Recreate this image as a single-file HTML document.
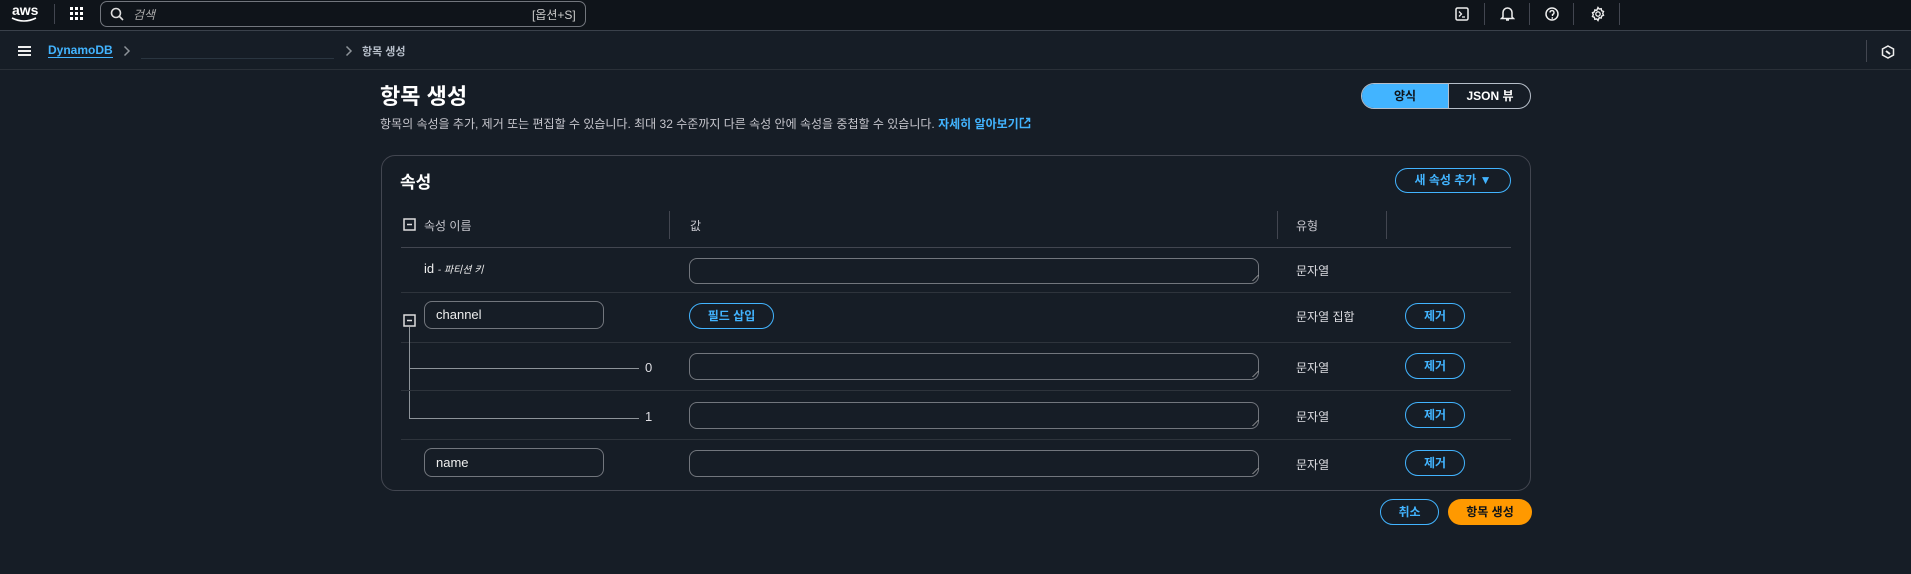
<!DOCTYPE html>
<html><head><meta charset="utf-8"><style>
*{box-sizing:border-box;margin:0;padding:0}
body{width:1911px;height:574px;background:#161d26;font-family:"Liberation Sans","Noto Sans CJK KR",sans-serif;color:#dedee3;position:relative;overflow:hidden;font-size:13px}
.a{position:absolute;white-space:nowrap}
.top{position:absolute;left:0;top:0;width:1911px;height:31px;background:#0f141a;border-bottom:1px solid #3a414b}
.bc{position:absolute;left:0;top:32px;width:1911px;height:38px;border-bottom:1px solid #2a3038}
.sep{position:absolute;width:1px;background:#424650}
.inp{position:absolute;border:1px solid #72767d;border-radius:8px;background:#161d26}
.btn{position:absolute;border:1px solid #42b4ff;border-radius:16px;color:#42b4ff;font-weight:bold;font-size:12px;text-align:center}
.hl{position:absolute;height:1px;background:#2e343c;left:401px;width:1110px}
.typ{position:absolute;left:1296px;font-size:12px}
.rz{position:absolute;right:2px;bottom:2px;width:6px;height:6px;border-right:1px solid #aaa;transform:skewX(-45deg)}
</style></head><body>
<div class="top"></div>
<div class="a" style="left:12px;top:2px;font-size:14px;font-weight:bold;color:#fff">aws</div>
<svg class="a" style="left:10px;top:16px" width="30" height="8"><path d="M2 2 Q14 8 26 2" stroke="#fff" stroke-width="1.6" fill="none"/></svg>
<div class="sep" style="left:54px;top:4px;height:20px"></div>
<svg class="a" style="left:70px;top:7px" width="14" height="14" fill="#fff"><rect x="0" y="0" width="3" height="3"/><rect x="5" y="0" width="3" height="3"/><rect x="10" y="0" width="3" height="3"/><rect x="0" y="5" width="3" height="3"/><rect x="5" y="5" width="3" height="3"/><rect x="10" y="5" width="3" height="3"/><rect x="0" y="10" width="3" height="3"/><rect x="5" y="10" width="3" height="3"/><rect x="10" y="10" width="3" height="3"/></svg>
<div class="a" style="left:100px;top:1px;width:486px;height:26px;border:1px solid #72767d;border-radius:7px;background:#0f141a"></div>
<svg class="a" style="left:110px;top:7px" width="14" height="14"><circle cx="6" cy="6" r="4.5" stroke="#ddd" stroke-width="1.6" fill="none"/><path d="M9.5 9.5L13 13" stroke="#ddd" stroke-width="1.6"/></svg>
<div class="a" style="left:133px;top:6px;font-style:italic;color:#aaa;font-size:12px">검색</div>
<div class="a" style="left:532px;top:6px;color:#ccc;font-size:12px">[옵션+S]</div>
<svg class="a" style="left:1455px;top:7px" width="15" height="15"><rect x="1" y="1" width="12" height="12" rx="1.5" stroke="#eee" stroke-width="1.5" fill="none"/><path d="M4 4.5L6.5 7 4 9.5M7 10h3" stroke="#eee" stroke-width="1.3" fill="none"/></svg>
<div class="sep" style="left:1484px;top:3px;height:22px"></div>
<svg class="a" style="left:1500px;top:6px" width="15" height="16"><path d="M3 11V6.5a4.5 4.5 0 0 1 9 0V11l1.5 1.5h-12z M6 14h3" stroke="#eee" stroke-width="1.5" fill="none"/></svg>
<div class="sep" style="left:1529px;top:3px;height:22px"></div>
<svg class="a" style="left:1545px;top:7px" width="15" height="15"><circle cx="7" cy="7" r="6" stroke="#eee" stroke-width="1.5" fill="none"/><path d="M5 5.5a2 2 0 1 1 2.5 2V9" stroke="#eee" stroke-width="1.4" fill="none"/><circle cx="7.3" cy="11" r=".9" fill="#eee"/></svg>
<div class="sep" style="left:1573px;top:3px;height:22px"></div>
<svg class="a" style="left:1590px;top:6px" width="16" height="16"><path d="M8 1.5l1.2 1.6 2-.4.4 2 1.9.8-.8 1.9.8 1.9-1.9.8-.4 2-2-.4L8 14.5l-1.2-1.6-2 .4-.4-2-1.9-.8.8-1.9-.8-1.9 1.9-.8.4-2 2 .4z" stroke="#eee" stroke-width="1.4" fill="none"/><circle cx="8" cy="8" r="2.2" stroke="#eee" stroke-width="1.3" fill="none"/></svg>
<div class="sep" style="left:1619px;top:3px;height:22px"></div>

<div class="bc"></div>
<div class="a" style="left:18px;top:46px;width:13px;height:2px;background:#eee;box-shadow:0 4px #eee,0 8px #eee"></div>
<div class="a" style="left:48px;top:43px;color:#42b4ff;font-size:12px;font-weight:bold;border-bottom:1px solid #42b4ff;line-height:14px">DynamoDB</div>
<svg class="a" style="left:123px;top:45px" width="8" height="12"><path d="M1.5 1.5L6 6l-4.5 4.5" stroke="#8d9399" stroke-width="1.5" fill="none"/></svg>
<div class="a" style="left:141px;top:58px;width:193px;height:1px;background:#2a3540"></div>
<svg class="a" style="left:345px;top:45px" width="8" height="12"><path d="M1.5 1.5L6 6l-4.5 4.5" stroke="#8d9399" stroke-width="1.5" fill="none"/></svg>
<div class="a" style="left:362px;top:43px;color:#b6bec9;font-size:11px;font-weight:bold">항목 생성</div>
<div class="sep" style="left:1866px;top:40px;height:22px"></div>
<svg class="a" style="left:1881px;top:45px" width="14" height="14"><path d="M7 1l5.5 3v6L7 13 1.5 10V4z" stroke="#eee" stroke-width="1.5" fill="none"/><path d="M5 6l4 3" stroke="#eee" stroke-width="2"/></svg>

<div class="a" style="left:380px;top:79px;font-size:22px;font-weight:bold;color:#fff">항목 생성</div>
<div class="a" style="left:380px;top:115px;font-size:12px;color:#c6c6cd">항목의 속성을 추가, 제거 또는 편집할 수 있습니다. 최대 32 수준까지 다른 속성 안에 속성을 중첩할 수 있습니다. <span style="color:#42b4ff;font-weight:bold">자세히 알아보기</span></div>
<svg class="a" style="left:1019px;top:117px" width="12" height="12"><path d="M5 1.5H1.5v9h9V7M7 1.5h3.5V5M10.5 1.5L5.5 6.5" stroke="#42b4ff" stroke-width="1.5" fill="none"/></svg>

<div class="a" style="left:1361px;top:83px;width:170px;height:26px;border:1px solid #b6bec9;border-radius:14px;overflow:hidden">
<div class="a" style="left:0;top:0;width:86px;height:24px;background:#42b4ff;color:#0f141a;text-align:center;line-height:24px;font-size:12px;font-weight:bold">양식</div>
<div class="a" style="left:86px;top:0;width:1px;height:24px;background:#b6bec9"></div>
<div class="a" style="left:87px;top:0;width:82px;height:24px;color:#fff;text-align:center;line-height:24px;font-size:12px;font-weight:bold">JSON 뷰</div>
</div>

<div class="a" style="left:381px;top:155px;width:1150px;height:336px;border:1px solid #424650;border-radius:14px"></div>
<div class="a" style="left:400px;top:168px;font-size:17px;font-weight:bold;color:#fff">속성</div>
<div class="btn" style="left:1395px;top:168px;width:116px;height:25px;line-height:23px">새 속성 추가 ▼</div>

<svg class="a" style="left:403px;top:218px" width="13" height="13"><rect x="1" y="1" width="11" height="11" stroke="#ddd" stroke-width="1.5" fill="none"/><path d="M4 6.5h5" stroke="#ddd" stroke-width="1.5"/></svg>
<div class="a" style="left:424px;top:217px;font-size:12px;color:#c6c6cd">속성 이름</div>
<div class="sep" style="left:669px;top:211px;height:28px"></div>
<div class="a" style="left:690px;top:217px;font-size:12px;color:#c6c6cd">값</div>
<div class="sep" style="left:1277px;top:211px;height:28px"></div>
<div class="a" style="left:1296px;top:217px;font-size:12px;color:#c6c6cd">유형</div>
<div class="sep" style="left:1386px;top:211px;height:28px"></div>
<div class="hl" style="top:247px;background:#424650"></div>

<div class="a" style="left:424px;top:261px;font-size:13px;color:#eee">id <span style="font-size:10px;font-style:italic">- 파티션 키</span></div>
<div class="inp" style="left:689px;top:258px;width:570px;height:26px"><div class="rz"></div></div>
<div class="typ" style="top:262px">문자열</div>
<div class="hl" style="top:292px"></div>

<svg class="a" style="left:403px;top:314px" width="13" height="13"><rect x="1" y="1" width="11" height="11" stroke="#ddd" stroke-width="1.5" fill="none"/><path d="M4 6.5h5" stroke="#ddd" stroke-width="1.5"/></svg>
<div class="inp" style="left:424px;top:301px;width:180px;height:28px"></div>
<div class="a" style="left:436px;top:307px;font-size:13px;color:#eee">channel</div>
<div class="btn" style="left:689px;top:303px;width:85px;height:26px;line-height:24px">필드 삽입</div>
<div class="typ" style="top:308px">문자열 집합</div>
<div class="btn" style="left:1405px;top:303px;width:60px;height:26px;line-height:24px">제거</div>
<div class="hl" style="top:342px"></div>

<div class="a" style="left:409px;top:327px;width:1px;height:92px;background:#8d9399"></div>
<div class="a" style="left:409px;top:368px;width:230px;height:1px;background:#8d9399"></div>
<div class="a" style="left:409px;top:418px;width:230px;height:1px;background:#8d9399"></div>

<div class="a" style="left:645px;top:360px;font-size:13px">0</div>
<div class="inp" style="left:689px;top:353px;width:570px;height:27px"><div class="rz"></div></div>
<div class="typ" style="top:359px">문자열</div>
<div class="btn" style="left:1405px;top:353px;width:60px;height:26px;line-height:24px">제거</div>
<div class="hl" style="top:390px"></div>

<div class="a" style="left:645px;top:409px;font-size:13px">1</div>
<div class="inp" style="left:689px;top:402px;width:570px;height:27px"><div class="rz"></div></div>
<div class="typ" style="top:408px">문자열</div>
<div class="btn" style="left:1405px;top:402px;width:60px;height:26px;line-height:24px">제거</div>
<div class="hl" style="top:439px"></div>

<div class="inp" style="left:424px;top:448px;width:180px;height:29px"></div>
<div class="a" style="left:436px;top:455px;font-size:13px;color:#eee">name</div>
<div class="inp" style="left:689px;top:450px;width:570px;height:27px"><div class="rz"></div></div>
<div class="typ" style="top:456px">문자열</div>
<div class="btn" style="left:1405px;top:450px;width:60px;height:26px;line-height:24px">제거</div>

<div class="btn" style="left:1380px;top:499px;width:59px;height:26px;line-height:24px">취소</div>
<div class="a" style="left:1448px;top:499px;width:84px;height:26px;border-radius:14px;background:#ff9900;color:#0f141a;font-weight:bold;font-size:12px;text-align:center;line-height:26px">항목 생성</div>
</body></html>
